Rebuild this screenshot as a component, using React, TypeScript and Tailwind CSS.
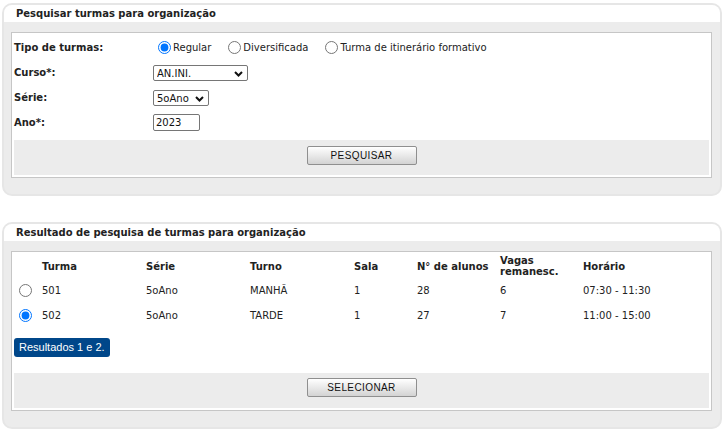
import type { ReactNode } from "react";

const rows = [
  { id: "501", serie: "5oAno", turno: "MANHÃ", sala: "1", alunos: "28", vagas: "6", horario: "07:30 - 11:30", checked: false },
  { id: "502", serie: "5oAno", turno: "TARDE", sala: "1", alunos: "27", vagas: "7", horario: "11:00 - 15:00", checked: true },
];

const cols = "grid grid-cols-[28px_104px_104px_104px_63px_83px_83px_1fr] items-center";

function Panel({ title, className, children }: { title: string; className?: string; children: ReactNode }) {
  return (
    <div className={`ml-[2px] mr-[4px] rounded-[10px] border-2 border-[#e6e6e6] bg-[#ececec] pb-[16px] ${className ?? ""}`}>
      <div className="h-[17px] rounded-t-[8px] bg-white pl-[12px] text-[10px] font-bold leading-[17px] text-[#222]">{title}</div>
      <div className="pl-[7px] pr-[8px] pt-[10px]">
        <div className="border border-[#c6c6c6] bg-white p-[2px]">{children}</div>
      </div>
    </div>
  );
}

function Chevron() {
  return (
    <svg className="pointer-events-none absolute right-[4px] top-[5px]" width="9" height="6" viewBox="0 0 9 6">
      <path d="M1 1l3.5 3.5L8 1" stroke="#111" strokeWidth="2" fill="none" />
    </svg>
  );
}

function Select({ value, width }: { value: string; width: string }) {
  return (
    <div className={`relative h-[16px] ${width} rounded-[2px] border border-[#767676] bg-white`}>
      <select className="h-full w-full appearance-none bg-transparent pl-[3px] text-[10px] leading-[14px] text-[#111] outline-none" defaultValue={value}>
        <option>{value}</option>
      </select>
      <Chevron />
    </div>
  );
}

function Btn({ label }: { label: string }) {
  return (
    <button className="h-[19px] w-[110px] rounded-[2px] border border-[#8f8f8f] bg-gradient-to-b from-white to-[#d3d3d3] font-['Liberation_Sans',Arial,sans-serif] text-[10px] tracking-[0.4px] text-[#111]">
      {label}
    </button>
  );
}

function Radio({ label, checked, name }: { label?: string; checked?: boolean; name: string }) {
  return (
    <label className="flex items-center">
      <input type="radio" name={name} defaultChecked={checked} className="ml-[5px] mr-[2px] h-[13px] w-[13px]" />
      {label && <span className="mr-[12px]">{label}</span>}
    </label>
  );
}

export default function App() {
  return (
    <div className="min-h-[430px] bg-white pt-[3px] font-['DejaVu_Sans',Verdana,sans-serif] text-[10px] text-[#222]">
      <Panel title="Pesquisar turmas para organização">
        <div className="grid grid-cols-[139px_1fr] [&>div]:flex [&>div]:h-[25px] [&>div]:items-center">
          <div className="font-bold">Tipo de turmas:</div>
          <div>
            <Radio name="tipo" label="Regular" checked />
            <Radio name="tipo" label="Diversificada" />
            <Radio name="tipo" label="Turma de itinerário formativo" />
          </div>
          <div className="font-bold">Curso*:</div>
          <div>
            <Select value="AN.INI." width="w-[95px]" />
          </div>
          <div className="font-bold">Série:</div>
          <div>
            <Select value="5oAno" width="w-[56px]" />
          </div>
          <div className="font-bold">Ano*:</div>
          <div>
            <input
              defaultValue="2023"
              className="h-[17px] w-[47px] rounded-[2px] border border-[#767676] px-[2px] text-[10px] text-[#111] outline-none"
            />
          </div>
        </div>
        <div className="mt-[5px] flex h-[35px] justify-center bg-[#ececec] pt-[6px]">
          <Btn label="PESQUISAR" />
        </div>
      </Panel>

      <Panel title="Resultado de pesquisa de turmas para organização" className="mt-[26px]">
        <div className={`${cols} h-[24px] font-bold`}>
          <div />
          <div>Turma</div>
          <div>Série</div>
          <div>Turno</div>
          <div>Sala</div>
          <div>N° de alunos</div>
          <div className="leading-[11px]">
            Vagas
            <br />
            remanesc.
          </div>
          <div>Horário</div>
        </div>
        {rows.map((r) => (
          <div key={r.id} className={`${cols} h-[25px]`}>
            <div className="flex">
              <Radio name="turma" checked={r.checked} />
            </div>
            <div>{r.id}</div>
            <div>{r.serie}</div>
            <div>{r.turno}</div>
            <div>{r.sala}</div>
            <div>{r.alunos}</div>
            <div>{r.vagas}</div>
            <div>{r.horario}</div>
          </div>
        ))}
        <div className="mt-[10px] flex">
          <span className="flex h-[19px] items-center rounded-[3px] bg-[#00478a] px-[5px] font-['Liberation_Sans',Arial,sans-serif] text-[11px] text-white">
            Resultados 1 e 2.
          </span>
        </div>
        <div className="mt-[16px] flex h-[35px] justify-center bg-[#ececec] pt-[5px]">
          <Btn label="SELECIONAR" />
        </div>
      </Panel>
    </div>
  );
}
